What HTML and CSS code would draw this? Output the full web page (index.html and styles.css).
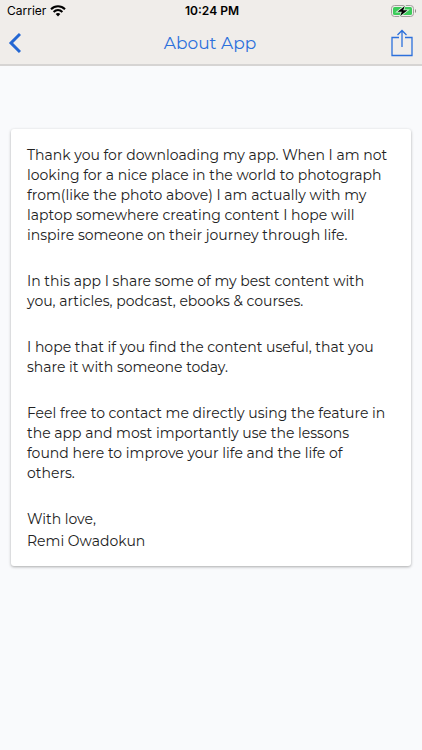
FILE: index.html
```html
<!DOCTYPE html>
<html lang="en">
<head>
<meta charset="utf-8">
<meta name="viewport" content="width=device-width, initial-scale=1">
<title>About App</title>
<link rel="stylesheet" href="styles.css">
</head>
<body>
<header class="top">
  <div class="status">
    <div class="carrier">Carrier
      <svg width="16" height="12" viewBox="0 0 16 12" fill="none" stroke="#000" stroke-width="2.1" aria-hidden="true">
        <path d="M1 4.2C5 .3 11 .3 15 4.2M3.6 6.9c2.6-2.4 6.2-2.4 8.8 0"/>
        <path d="M5.7 9c1.4-1.2 3.2-1.2 4.6 0L8 11.4z" fill="#000" stroke="none"/>
      </svg>
    </div>
    <div class="clock">10:24 PM</div>
    <svg class="battery" width="26" height="12" viewBox="0 0 26 12" aria-hidden="true">
      <rect x=".5" y=".5" width="22" height="11" rx="3" fill="none" stroke="#a19e9c"/>
      <rect x="2" y="2" width="19" height="8" rx="1.6" fill="#3ccb5a"/>
      <path d="M24 4v4c1.4-.6 1.4-3.4 0-4z" fill="#8d8a88"/>
      <path d="M13.8 1 6.5 6.7h4.3L9.2 11l7.3-5.7h-4.3z" fill="#000" stroke="#d9f3dc" stroke-width="1.6" paint-order="stroke"/>
    </svg>
  </div>
  <nav class="bar">
    <button class="icon" type="button" aria-label="Back">
      <svg width="14" height="22" viewBox="0 0 14 22" fill="none" stroke="#2467d3" stroke-width="3"><path d="M13 2 4 11l9 9"/></svg>
    </button>
    <h1 class="title">About App</h1>
    <button class="icon share" type="button" aria-label="Share">
      <svg width="22" height="28" viewBox="0 0 22 28" fill="none" stroke="#2c70dc" stroke-width="1.3"><path d="M8 8.5H1v18h20v-18h-7M11 18V1.5M6.5 6 11 1.5 15.5 6"/></svg>
    </button>
  </nav>
</header>
<main class="page">
  <article class="card">
    <p>Thank you for downloading my app. When I am not<br>looking for a nice place in the world to photograph<br>from(like the photo above) I am actually with my<br>laptop somewhere creating content I hope will<br>inspire someone on their journey through life.</p>
    <p>In this app I share some of my best content with<br>you, articles, podcast, ebooks &amp; courses.</p>
    <p>I hope that if you find the content useful, that you<br>share it with someone today.</p>
    <p>Feel free to contact me directly using the feature in<br>the app and most importantly use the lessons<br>found here to improve your life and the life of<br>others.</p>
    <div class="signoff">
      <p>With love,</p>
      <p>Remi Owadokun</p>
    </div>
  </article>
</main>
</body>
</html>
```
FILE: styles.css
```css
* { box-sizing: border-box; }
body {
  margin: 0;
  min-height: 100vh;
  background: #f9fafc;
  color: #222;
  font-family: Montserrat, Inter, sans-serif;
}
.top {
  background: #f0edea;
  border-bottom: 2px solid #d6d4d3;
}
.status {
  display: grid;
  grid-template-columns: 1fr auto 1fr;
  align-items: center;
  height: 22px;
  padding: 0 5px 0 7px;
  color: #000;
  font: 12px/22px Inter, sans-serif;
}
.carrier {
  display: flex;
  align-items: center;
  gap: 4px;
}
.clock { font-weight: 600; }
.battery { justify-self: end; }
.bar {
  display: grid;
  grid-template-columns: 1fr auto 1fr;
  align-items: center;
  height: 42px;
  padding: 0 9px 0 7px;
}
.icon {
  display: flex;
  justify-self: start;
  padding: 0;
  border: 0;
  background: none;
}
.share { justify-self: end; }
.title {
  margin: 0;
  color: #2c70dc;
  font-size: 17px;
  font-weight: 400;
}
.page { padding: 63px 11px; }
.card {
  display: flex;
  flex-direction: column;
  gap: 26px;
  padding: 16px 16px 15px;
  border-radius: 3px;
  background: #fff;
  box-shadow: 0 1px 3px rgba(0, 0, 0, .32);
  font-size: 14px;
  font-weight: 450;
  line-height: 20px;
}
.card p { margin: 0; }
.signoff {
  display: flex;
  flex-direction: column;
  gap: 2px;
}
```
